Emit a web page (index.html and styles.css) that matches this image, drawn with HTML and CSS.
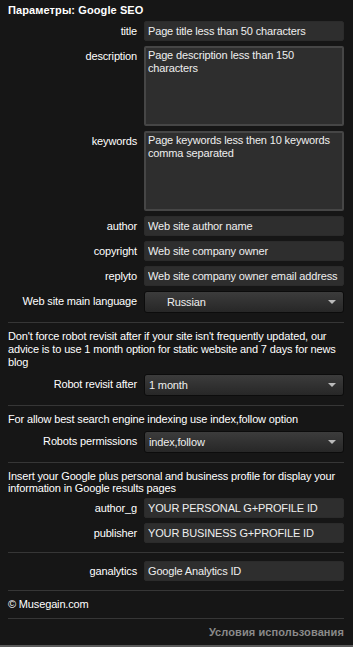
FILE: index.html
```html
<!DOCTYPE html>
<html>
<head>
    <link rel="stylesheet" href="styles.css">
</head>
<body>
    <div class="panel">
        <div class="heading">Параметры: Google SEO</div>

        <div class="row">
            <label class="label">title</label>
            <input class="field" type="text" value="Page title less than 50 characters">
        </div>
        <div class="row">
            <label class="label">description</label>
            <textarea class="field area">Page description less than 150 characters</textarea>
        </div>
        <div class="row">
            <label class="label">keywords</label>
            <textarea class="field area">Page keywords less then 10 keywords comma separated</textarea>
        </div>
        <div class="row">
            <label class="label">author</label>
            <input class="field" type="text" value="Web site author name">
        </div>
        <div class="row">
            <label class="label">copyright</label>
            <input class="field" type="text" value="Web site company owner">
        </div>
        <div class="row">
            <label class="label">replyto</label>
            <input class="field" type="text" value="Web site company owner email address">
        </div>
        <div class="row">
            <label class="label">Web site main language</label>
            <div class="select-wrap">
                <select class="select indent">
                    <option>Russian</option>
                </select>
            </div>
        </div>

        <div class="section">
            <p class="note">Don't force robot revisit after if your site isn't frequently updated, our advice is to use 1 month option for static website and 7 days for news blog</p>
            <div class="row">
                <label class="label">Robot revisit after</label>
                <div class="select-wrap">
                    <select class="select">
                        <option>1 month</option>
                    </select>
                </div>
            </div>
        </div>

        <div class="section">
            <p class="note">For allow best search engine indexing use index,follow option</p>
            <div class="row">
                <label class="label">Robots permissions</label>
                <div class="select-wrap">
                    <select class="select">
                        <option>index,follow</option>
                    </select>
                </div>
            </div>
        </div>

        <div class="section">
            <p class="note tight">Insert your Google plus personal and business profile for display your information in Google results pages</p>
            <div class="row">
                <label class="label">author_g</label>
                <input class="field" type="text" value="YOUR PERSONAL G+PROFILE ID">
            </div>
            <div class="row">
                <label class="label">publisher</label>
                <input class="field" type="text" value="YOUR BUSINESS G+PROFILE ID">
            </div>
        </div>

        <div class="section analytics">
            <div class="row">
                <label class="label">ganalytics</label>
                <input class="field" type="text" value="Google Analytics ID">
            </div>
        </div>

        <div class="section copy">© Musegain.com</div>
        <div class="section terms">Условия использования</div>
    </div>
    <div class="bottom-bar"></div>
</body>
</html>
```

FILE: styles.css
```css
body {
    margin: 0;
    height: 647px;
    background-color: #161616;
    color: #fff;
    font-family: "Liberation Sans", Arial, sans-serif;
    font-size: 11px;
    letter-spacing: -0.15px;
    overflow: hidden;
    display: flex;
    flex-direction: column;
}
.panel {
    flex: 1;
    display: flex;
    flex-direction: column;
    padding: 0 9px 0 8px;
}
.heading {
    font-weight: bold;
    letter-spacing: 0.1px;
    padding-top: 4px;
    height: 17px;
}
.row {
    display: flex;
    align-items: flex-start;
    gap: 7px;
    margin-bottom: 5px;
}
.label {
    width: 129px;
    flex-shrink: 0;
    text-align: right;
    padding-top: 4px;
    color: #fff;
}
.field {
    box-sizing: border-box;
    width: 200px;
    height: 20px;
    margin: 0;
    padding: 2px 3px;
    border: 1px solid #2b2b2b;
    border-radius: 2px;
    background-color: #2e2e2e;
    color: #eee;
    font-family: inherit;
    font-size: 11px;
    letter-spacing: -0.15px;
    outline: none;
}
.area {
    height: 80px;
    resize: none;
    border: 2px solid #464646;
    padding: 1px 2px;
    line-height: 13px;
    overflow: hidden;
}
.select-wrap {
    position: relative;
    width: 200px;
    height: 22px;
}
.select-wrap::after {
    content: '';
    position: absolute;
    top: 9px;
    right: 8px;
    border-style: solid;
    border-width: 4px 4px 0 4px;
    border-color: #bbb transparent transparent transparent;
    pointer-events: none;
}
.select {
    appearance: none;
    -webkit-appearance: none;
    box-sizing: border-box;
    width: 200px;
    height: 22px;
    margin: 0;
    padding: 0 4px;
    border: 1px solid #0c0c0c;
    border-radius: 3px;
    background: linear-gradient(#3c3c3c, #272727);
    color: #eee;
    font-family: inherit;
    font-size: 11px;
    letter-spacing: -0.15px;
    outline: none;
}
.select.indent {
    padding-left: 22px;
}
.section {
    border-top: 1px solid #363636;
    margin-top: 4px;
    padding-top: 7px;
}
.note {
    margin: 0 0 5px 0;
    line-height: 13px;
}
.note.tight {
    line-height: 12px;
    margin-bottom: 4px;
}
.analytics {
    padding-top: 8px;
}
.copy {
    height: 16px;
}
.terms {
    text-align: right;
    font-weight: bold;
    letter-spacing: 0.1px;
    color: #8a8a8a;
}
.bottom-bar {
    height: 2px;
    background-color: #5a5a5a;
}
```
